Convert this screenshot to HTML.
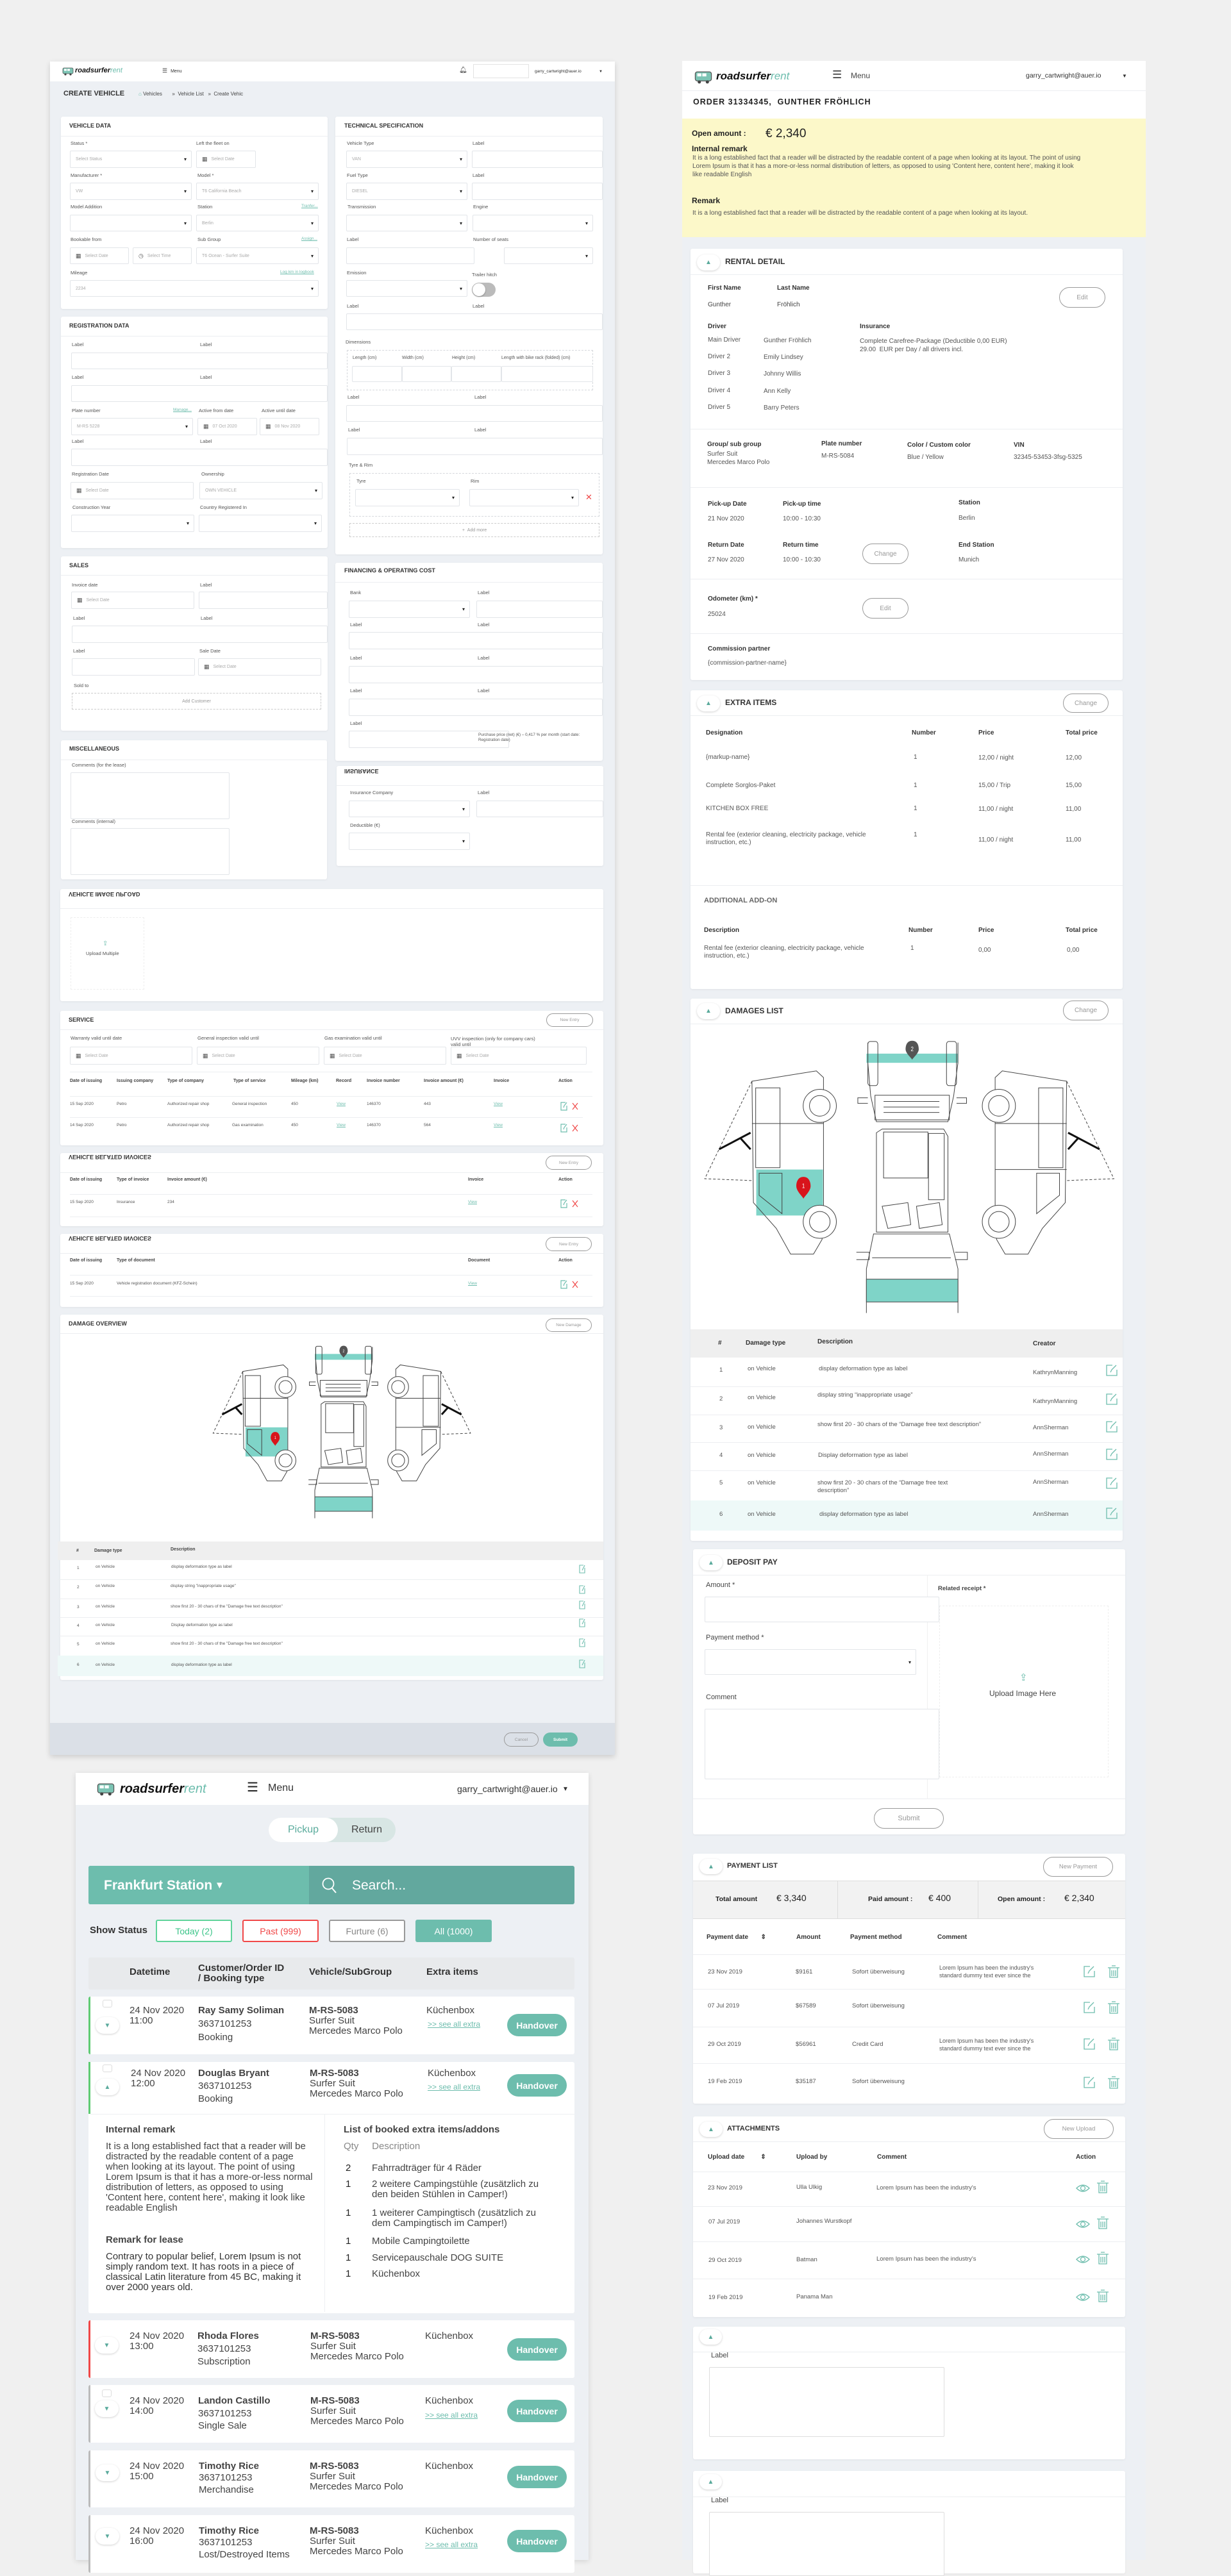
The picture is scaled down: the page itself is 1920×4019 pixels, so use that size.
<!DOCTYPE html>
<html><head><meta charset="utf-8">
<style>
*{margin:0;padding:0;box-sizing:border-box}
body{width:1920px;height:3994px;background:#f0f0f0;position:relative;overflow:hidden;font-family:"Liberation Sans",sans-serif;color:#333}
.a{position:absolute}
.t{position:absolute;white-space:nowrap;line-height:1}
.n{font-family:"Liberation Sans Narrow","Liberation Sans",sans-serif}
.L{font-size:7.5px;color:#555}
.i{position:absolute;background:#fff;border:1px solid #e2e5e9;border-radius:2px;font-size:7px;color:#aaa;padding-left:8px;display:flex;align-items:center;white-space:nowrap;overflow:hidden}
.s::after{content:"▾";position:absolute;right:7px;color:#222;font-size:8px}
.c{position:absolute;background:#fff;border-radius:3px;box-shadow:0 1px 3px rgba(0,0,0,.06)}
.h{position:absolute;height:1px;background:#eceef1}
.ct{position:absolute;font-size:9px;font-weight:bold;color:#333;white-space:nowrap;line-height:1}
.fl{transform:scaleY(-1)}
.lk{color:#6dbdad;text-decoration:underline}
.bo{position:absolute;border:1.5px solid #999;border-radius:20px;color:#999;display:flex;align-items:center;justify-content:center;background:#fff;white-space:nowrap}
.tg{position:absolute;width:36px;height:25px;border-radius:13px;background:#fff;box-shadow:0 1px 3px rgba(0,0,0,.18);color:#5aaa9c;font-size:10px;display:flex;align-items:center;justify-content:center}
.dash{position:absolute;border:1px dashed #d5d8dc}
.cal{color:#555;margin-right:6px;font-size:9px}
.x{color:#f04848}
.r{font-size:11px;color:#444}
.rb{font-size:11px;color:#333;font-weight:bold}
.B{font-size:15px;color:#444}
.hv{position:absolute;left:791px;width:93px;height:35px;border-radius:18px;background:#6dbdad;color:#fff;font-size:14px;font-weight:bold;display:flex;align-items:center;justify-content:center}
</style></head><body>

<!-- ============ LEFT BIG PANEL ============ -->
<div class="a" style="left:78px;top:96px;width:881px;height:2642px;background:#edf0f4;box-shadow:0 3px 8px rgba(0,0,0,.15)"></div>
<div class="a" style="left:78px;top:96px;width:881px;height:31px;background:#fff"></div>
<svg class="a" style="left:97px;top:104px" width="18" height="14" viewBox="0 0 18 14"><rect x="1" y="2" width="16" height="9" rx="2" fill="#7cc4b4" stroke="#555" stroke-width=".8"/><rect x="3" y="3.5" width="4" height="3" fill="#fff"/><rect x="8" y="3.5" width="4" height="3" fill="#fff"/><circle cx="5" cy="12" r="1.6" fill="#444"/><circle cx="13" cy="12" r="1.6" fill="#444"/></svg>
<div class="t" style="left:117px;top:105px;font-size:11px;font-weight:bold;font-style:italic;color:#111">roadsurfer<span style="color:#6dbdad;font-weight:normal">rent</span></div>
<div class="t" style="left:253px;top:106px;font-size:9px;color:#333">☰ &nbsp;<span style="font-size:7px">Menu</span></div>
<div class="t" style="left:716px;top:105px;font-size:10px">🔔︎</div>
<div class="a" style="left:738px;top:100px;width:87px;height:22px;border:1px solid #e3e3e3"></div>
<div class="t n" style="left:834px;top:109px;font-size:6.5px;color:#333">garry_cartwright@auer.io</div>
<div class="t" style="left:934px;top:109px;font-size:6px">▼</div>
<div class="t n" style="left:99px;top:141px;font-size:11px;font-weight:bold;color:#333">CREATE VEHICLE</div>
<div class="t n" style="left:216px;top:143px;font-size:8px;color:#444"><span style="color:#6dbdad">⌂</span> Vehicles &nbsp; &nbsp; &nbsp; » &nbsp;Vehicle List &nbsp; » &nbsp;Create Vehic</div>

<!-- Vehicle data -->
<div class="c n" style="left:95px;top:182px;width:416px;height:300px"></div>
<div class="ct n" style="left:108px;top:192px">VEHICLE DATA</div>
<div class="h" style="left:95px;top:212px;width:416px"></div>
<div class="t n L" style="left:110px;top:220px">Status *</div><div class="i s n" style="left:109px;top:235px;width:190px;height:27px">Select Status</div>
<div class="t n L" style="left:306px;top:220px">Left the fleet on</div><div class="i n" style="left:306px;top:235px;width:93px;height:27px"><span class="cal">▦</span>Select Date</div>
<div class="t n L" style="left:110px;top:270px">Manufacturer *</div><div class="i s n" style="left:109px;top:285px;width:190px;height:27px">VW</div>
<div class="t n L" style="left:308px;top:270px">Model *</div><div class="i s n" style="left:306px;top:285px;width:191px;height:27px">T6 California Beach</div>
<div class="t n L" style="left:110px;top:319px">Model Addition</div><div class="i s n" style="left:109px;top:335px;width:190px;height:26px"></div>
<div class="t n L" style="left:308px;top:319px">Station</div><div class="t n lk" style="left:470px;top:319px;font-size:6.5px">Tranfer...</div><div class="i s n" style="left:306px;top:335px;width:191px;height:26px">Berlin</div>
<div class="t n L" style="left:110px;top:370px">Bookable from</div><div class="i n" style="left:109px;top:386px;width:92px;height:26px"><span class="cal">▦</span>Select Date</div><div class="i n" style="left:207px;top:386px;width:92px;height:26px"><span class="cal">◷</span>Select Time</div>
<div class="t n L" style="left:308px;top:370px">Sub Group</div><div class="t n lk" style="left:470px;top:370px;font-size:6.5px">Assign...</div><div class="i s n" style="left:306px;top:386px;width:191px;height:26px">T6 Ocean - Surfer Suite</div>
<div class="t n L" style="left:110px;top:422px">Mileage</div><div class="t n lk" style="left:437px;top:422px;font-size:6.5px">Log km in logbook</div><div class="i s n" style="left:109px;top:437px;width:388px;height:26px">2234</div>

<!-- Technical spec -->
<div class="c n" style="left:523px;top:182px;width:417px;height:683px;overflow:hidden">
</div>
<div class="ct n" style="left:537px;top:192px">TECHNICAL SPECIFICATION</div>
<div class="h" style="left:523px;top:212px;width:417px"></div>
<div class="t n L" style="left:541px;top:220px">Vehicle Type</div><div class="i s n" style="left:540px;top:235px;width:189px;height:27px">VAN</div>
<div class="t n L" style="left:737px;top:220px">Label</div><div class="i n" style="left:736px;top:235px;width:204px;height:27px"></div>
<div class="t n L" style="left:541px;top:270px">Fuel Type</div><div class="i s n" style="left:540px;top:285px;width:189px;height:27px">DIESEL</div>
<div class="t n L" style="left:737px;top:270px">Label</div><div class="i n" style="left:736px;top:285px;width:204px;height:27px"></div>
<div class="t n L" style="left:542px;top:319px">Transmission</div><div class="i s n" style="left:540px;top:335px;width:189px;height:26px"></div>
<div class="t n L" style="left:738px;top:319px">Engine</div><div class="i s n" style="left:737px;top:335px;width:188px;height:26px"></div>
<div class="t n L" style="left:541px;top:370px">Label</div><div class="i n" style="left:540px;top:386px;width:200px;height:26px"></div>
<div class="t n L" style="left:738px;top:370px">Number of seats</div><div class="i s n" style="left:786px;top:386px;width:139px;height:26px"></div>
<div class="t n L" style="left:541px;top:422px">Emission</div><div class="i s n" style="left:540px;top:437px;width:189px;height:26px"></div>
<div class="t n L" style="left:736px;top:425px">Trailer hitch</div>
<div class="a" style="left:736px;top:441px;width:37px;height:22px;border-radius:11px;background:#bbb"></div><div class="a" style="left:737px;top:442px;width:20px;height:20px;border-radius:10px;background:#fff;box-shadow:0 1px 2px rgba(0,0,0,.3)"></div>
<div class="t n L" style="left:541px;top:474px">Label</div><div class="t n L" style="left:737px;top:474px">Label</div><div class="i n" style="left:540px;top:489px;width:400px;height:26px"></div>
<div class="t n L" style="left:539px;top:530px">Dimensions</div>
<div class="dash" style="left:541px;top:546px;width:384px;height:63px"></div>
<div class="t n L" style="left:550px;top:555px;font-size:7px">Length (cm)</div><div class="t n L" style="left:627px;top:555px;font-size:7px">Width (cm)</div><div class="t n L" style="left:705px;top:555px;font-size:7px">Height (cm)</div><div class="t n L" style="left:782px;top:555px;font-size:7px">Length with bike rack (folded) (cm)</div>
<div class="i" style="left:549px;top:571px;width:78px;height:25px"></div><div class="i" style="left:627px;top:571px;width:77px;height:25px"></div><div class="i" style="left:704px;top:571px;width:78px;height:25px"></div><div class="i" style="left:782px;top:571px;width:143px;height:25px"></div>
<div class="t n L" style="left:542px;top:616px">Label</div><div class="t n L" style="left:740px;top:616px">Label</div><div class="i" style="left:540px;top:632px;width:400px;height:26px"></div>
<div class="t n L" style="left:543px;top:667px">Label</div><div class="t n L" style="left:740px;top:667px">Label</div><div class="i" style="left:541px;top:683px;width:399px;height:27px"></div>
<div class="t n L" style="left:544px;top:722px">Tyre &amp; Rim</div>
<div class="dash" style="left:545px;top:738px;width:390px;height:68px"></div>
<div class="t n L" style="left:556px;top:747px">Tyre</div><div class="t n L" style="left:734px;top:747px">Rim</div>
<div class="i s" style="left:554px;top:763px;width:163px;height:27px"></div><div class="i s" style="left:732px;top:763px;width:171px;height:27px"></div>
<div class="t x" style="left:913px;top:769px;font-size:13px">✕</div>
<div class="dash n" style="left:545px;top:816px;width:390px;height:22px;display:flex;align-items:center;justify-content:center;font-size:7px;color:#999;border-color:#ccc">+ &nbsp;Add more</div>

<!-- Registration -->
<div class="c" style="left:95px;top:494px;width:416px;height:361px"></div>
<div class="ct n" style="left:108px;top:504px">REGISTRATION DATA</div>
<div class="h" style="left:95px;top:524px;width:416px"></div>
<div class="t n L" style="left:112px;top:534px">Label</div><div class="t n L" style="left:312px;top:534px">Label</div><div class="i" style="left:111px;top:550px;width:400px;height:26px"></div>
<div class="t n L" style="left:112px;top:585px">Label</div><div class="t n L" style="left:312px;top:585px">Label</div><div class="i" style="left:111px;top:601px;width:400px;height:26px"></div>
<div class="t n L" style="left:112px;top:637px">Plate number</div><div class="t n lk" style="left:270px;top:637px;font-size:6.5px">Manage...</div><div class="i s n" style="left:111px;top:652px;width:190px;height:27px">M-RS 5228</div>
<div class="t n L" style="left:310px;top:637px">Active from date</div><div class="i n" style="left:308px;top:652px;width:93px;height:27px"><span class="cal">▦</span>07 Oct 2020</div>
<div class="t n L" style="left:408px;top:637px">Active until date</div><div class="i n" style="left:405px;top:652px;width:93px;height:27px"><span class="cal">▦</span>08 Nov 2020</div>
<div class="t n L" style="left:112px;top:685px">Label</div><div class="t n L" style="left:312px;top:685px">Label</div><div class="i" style="left:111px;top:700px;width:400px;height:27px"></div>
<div class="t n L" style="left:112px;top:736px">Registration Date</div><div class="i n" style="left:110px;top:752px;width:192px;height:27px"><span class="cal">▦</span>Select Date</div>
<div class="t n L" style="left:314px;top:736px">Ownership</div><div class="i s n" style="left:311px;top:752px;width:192px;height:27px">OWN VEHICLE</div>
<div class="t n L" style="left:113px;top:788px">Construction Year</div><div class="i s" style="left:111px;top:803px;width:192px;height:27px"></div>
<div class="t n L" style="left:312px;top:788px">Country Registered In</div><div class="i s" style="left:310px;top:803px;width:192px;height:27px"></div>

<!-- Sales -->
<div class="c" style="left:95px;top:868px;width:416px;height:272px"></div>
<div class="ct n" style="left:108px;top:878px">SALES</div>
<div class="h" style="left:95px;top:897px;width:416px"></div>
<div class="t n L" style="left:112px;top:909px">Invoice date</div><div class="i n" style="left:111px;top:923px;width:192px;height:27px"><span class="cal">▦</span>Select Date</div>
<div class="t n L" style="left:312px;top:909px">Label</div><div class="i" style="left:310px;top:923px;width:201px;height:27px"></div>
<div class="t n L" style="left:114px;top:961px">Label</div><div class="t n L" style="left:313px;top:961px">Label</div><div class="i" style="left:112px;top:976px;width:399px;height:27px"></div>
<div class="t n L" style="left:114px;top:1012px">Label</div><div class="i" style="left:112px;top:1027px;width:192px;height:27px"></div>
<div class="t n L" style="left:311px;top:1012px">Sale Date</div><div class="i n" style="left:309px;top:1027px;width:192px;height:27px"><span class="cal">▦</span>Select Date</div>
<div class="t n L" style="left:115px;top:1066px">Sold to</div>
<div class="dash n" style="left:112px;top:1081px;width:389px;height:26px;display:flex;align-items:center;justify-content:center;font-size:7px;color:#999;border-color:#ccc">Add Customer</div>

<!-- Misc -->
<div class="c" style="left:95px;top:1155px;width:415px;height:217px"></div>
<div class="ct n" style="left:108px;top:1164px">MISCELLANEOUS</div>
<div class="h" style="left:95px;top:1185px;width:415px"></div>
<div class="t n L" style="left:112px;top:1190px">Comments (for the lease)</div><div class="i" style="left:110px;top:1205px;width:248px;height:73px"></div>
<div class="t n L" style="left:112px;top:1278px">Comments (internal)</div><div class="i" style="left:110px;top:1292px;width:248px;height:73px"></div>

<!-- Financing -->
<div class="c" style="left:523px;top:878px;width:417px;height:309px"></div>
<div class="ct n" style="left:537px;top:886px">FINANCING &amp; OPERATING COST</div>
<div class="h" style="left:523px;top:908px;width:417px"></div>
<div class="t n L" style="left:546px;top:921px">Bank</div><div class="t n L" style="left:745px;top:921px">Label</div>
<div class="i s" style="left:544px;top:937px;width:189px;height:27px"></div><div class="i" style="left:743px;top:937px;width:197px;height:27px"></div>
<div class="t n L" style="left:546px;top:971px">Label</div><div class="t n L" style="left:745px;top:971px">Label</div><div class="i" style="left:544px;top:986px;width:396px;height:27px"></div>
<div class="t n L" style="left:546px;top:1023px">Label</div><div class="t n L" style="left:745px;top:1023px">Label</div><div class="i" style="left:544px;top:1039px;width:396px;height:27px"></div>
<div class="t n L" style="left:546px;top:1074px">Label</div><div class="t n L" style="left:745px;top:1074px">Label</div><div class="i" style="left:544px;top:1090px;width:396px;height:27px"></div>
<div class="t n L" style="left:546px;top:1125px">Label</div><div class="i" style="left:544px;top:1140px;width:250px;height:27px"></div>
<div class="a n" style="left:746px;top:1143px;width:180px;font-size:6.3px;line-height:8px;color:#555">Purchase price (net) (€) – 0,417 % per month (start date: Registration date)</div>

<!-- Insurance -->
<div class="c" style="left:525px;top:1195px;width:416px;height:156px"></div>
<div class="ct n fl" style="left:537px;top:1198px">INSURANCE</div>
<div class="h" style="left:525px;top:1225px;width:416px"></div>
<div class="t n L" style="left:546px;top:1233px">Insurance Company</div><div class="i s" style="left:544px;top:1249px;width:189px;height:26px"></div>
<div class="t n L" style="left:745px;top:1233px">Label</div><div class="i" style="left:743px;top:1249px;width:198px;height:26px"></div>
<div class="t n L" style="left:546px;top:1284px">Deductible (€)</div><div class="i s" style="left:544px;top:1299px;width:189px;height:27px"></div>

<!-- Image upload -->
<div class="c" style="left:94px;top:1387px;width:847px;height:175px"></div>
<div class="ct n fl" style="left:107px;top:1390px">VEHICLE IMAGE UPLOAD</div>
<div class="h" style="left:94px;top:1417px;width:847px"></div>
<div class="dash" style="left:110px;top:1431px;width:115px;height:113px;border-color:#eee"></div>
<div class="t" style="left:160px;top:1468px;font-size:10px;color:#6dbdad">⇪</div>
<div class="t n" style="left:134px;top:1484px;font-size:7.5px;color:#555">Upload Multiple</div>

<!-- Service -->
<div class="c" style="left:94px;top:1577px;width:847px;height:210px"></div>
<div class="ct n" style="left:107px;top:1587px">SERVICE</div>
<div class="bo n" style="left:852px;top:1581px;width:73px;height:21px;font-size:6.5px">New Entry</div>
<div class="h" style="left:94px;top:1606px;width:847px"></div>
<div class="t n L" style="left:110px;top:1616px">Warranty valid until date</div><div class="t n L" style="left:308px;top:1616px">General inspection valid until</div><div class="t n L" style="left:506px;top:1616px">Gas examination valid until</div><div class="a n L" style="left:703px;top:1616px;line-height:9px">UVV inspection (only for company cars)<br>valid until</div>
<div class="i n" style="left:109px;top:1633px;width:191px;height:28px"><span class="cal">▦</span>Select Date</div>
<div class="i n" style="left:307px;top:1633px;width:191px;height:28px"><span class="cal">▦</span>Select Date</div>
<div class="i n" style="left:505px;top:1633px;width:191px;height:28px"><span class="cal">▦</span>Select Date</div>
<div class="i n" style="left:703px;top:1633px;width:212px;height:28px"><span class="cal">▦</span>Select Date</div>
<div class="h" style="left:109px;top:1672px;width:815px"></div>
<div class="n" style="font-size:7px;font-weight:bold;color:#444">
<div class="t" style="left:109px;top:1683px">Date of issuing</div><div class="t" style="left:182px;top:1683px">Issuing company</div><div class="t" style="left:261px;top:1683px">Type of company</div><div class="t" style="left:364px;top:1683px">Type of service</div><div class="t" style="left:454px;top:1683px">Mileage (km)</div><div class="t" style="left:524px;top:1683px">Record</div><div class="t" style="left:572px;top:1683px">Invoice number</div><div class="t" style="left:661px;top:1683px">Invoice amount (€)</div><div class="t" style="left:770px;top:1683px">Invoice</div><div class="t" style="left:871px;top:1683px">Action</div></div>
<div class="h" style="left:109px;top:1710px;width:815px"></div>
<div class="n" style="font-size:6.5px;color:#555">
<div class="t" style="left:109px;top:1720px">15 Sep 2020</div><div class="t" style="left:182px;top:1720px">Petro</div><div class="t" style="left:261px;top:1720px">Authorized repair shop</div><div class="t" style="left:362px;top:1720px">General inspection</div><div class="t" style="left:454px;top:1720px">450</div><div class="t lk" style="left:525px;top:1720px">View</div><div class="t" style="left:572px;top:1720px">146370</div><div class="t" style="left:661px;top:1720px">443</div><div class="t lk" style="left:770px;top:1720px">View</div>
<div class="t" style="left:109px;top:1753px">14 Sep 2020</div><div class="t" style="left:182px;top:1753px">Petro</div><div class="t" style="left:261px;top:1753px">Authorized repair shop</div><div class="t" style="left:362px;top:1753px">Gas examination</div><div class="t" style="left:454px;top:1753px">450</div><div class="t lk" style="left:525px;top:1753px">View</div><div class="t" style="left:572px;top:1753px">146370</div><div class="t" style="left:661px;top:1753px">564</div><div class="t lk" style="left:770px;top:1753px">View</div></div>
<div class="h" style="left:109px;top:1743px;width:800px"></div>

<!-- invoices 1 -->
<div class="c" style="left:94px;top:1799px;width:847px;height:114px"></div>
<div class="ct n fl" style="left:107px;top:1800px">VEHICLE RELATED INVOICES</div>
<div class="bo n" style="left:851px;top:1803px;width:72px;height:22px;font-size:6.5px">New Entry</div>
<div class="h" style="left:94px;top:1829px;width:847px"></div>
<div class="n" style="font-size:7px;font-weight:bold;color:#444"><div class="t" style="left:109px;top:1837px">Date of issuing</div><div class="t" style="left:182px;top:1837px">Type of invoice</div><div class="t" style="left:261px;top:1837px">Invoice amount (€)</div><div class="t" style="left:730px;top:1837px">Invoice</div><div class="t" style="left:871px;top:1837px">Action</div></div>
<div class="h" style="left:109px;top:1863px;width:815px"></div>
<div class="n" style="font-size:6.5px;color:#555"><div class="t" style="left:109px;top:1873px">15 Sep 2020</div><div class="t" style="left:182px;top:1873px">Insurance</div><div class="t" style="left:261px;top:1873px">234</div><div class="t lk" style="left:730px;top:1873px">View</div></div>
<div class="h" style="left:109px;top:1898px;width:815px"></div>

<!-- invoices 2 -->
<div class="c" style="left:94px;top:1925px;width:847px;height:114px"></div>
<div class="ct n fl" style="left:107px;top:1927px">VEHICLE RELATED INVOICES</div>
<div class="bo n" style="left:851px;top:1930px;width:72px;height:22px;font-size:6.5px">New Entry</div>
<div class="h" style="left:94px;top:1955px;width:847px"></div>
<div class="n" style="font-size:7px;font-weight:bold;color:#444"><div class="t" style="left:109px;top:1963px">Date of issuing</div><div class="t" style="left:182px;top:1963px">Type of document</div><div class="t" style="left:730px;top:1963px">Document</div><div class="t" style="left:871px;top:1963px">Action</div></div>
<div class="h" style="left:109px;top:1989px;width:815px"></div>
<div class="n" style="font-size:6.5px;color:#555"><div class="t" style="left:109px;top:2000px">15 Sep 2020</div><div class="t" style="left:182px;top:2000px">Vehicle registration document (KFZ-Schein)</div><div class="t lk" style="left:730px;top:2000px">View</div></div>
<div class="h" style="left:109px;top:2022px;width:815px"></div>

<!-- action icons (left panel) -->
<svg class="a" style="left:873px;top:1718px" width="40" height="56" viewBox="0 0 40 56"><g fill="none" stroke-width="1.2"><path d="M9 2H2v12h9V7" stroke="#6dbdad"/><path d="M6 10l1-3 4-5" stroke="#6dbdad"/><path d="M20 3l8 10M28 3l-8 10" stroke="#f04848"/><path d="M9 36H2v12h9V41" stroke="#6dbdad"/><path d="M6 44l1-3 4-5" stroke="#6dbdad"/><path d="M20 37l8 10M28 37l-8 10" stroke="#f04848"/></g></svg>
<svg class="a" style="left:873px;top:1870px" width="40" height="16" viewBox="0 0 40 16"><g fill="none" stroke-width="1.2"><path d="M9 2H2v12h9V7" stroke="#6dbdad"/><path d="M6 10l1-3 4-5" stroke="#6dbdad"/><path d="M20 3l8 10M28 3l-8 10" stroke="#f04848"/></g></svg>
<svg class="a" style="left:873px;top:1996px" width="40" height="16" viewBox="0 0 40 16"><g fill="none" stroke-width="1.2"><path d="M9 2H2v12h9V7" stroke="#6dbdad"/><path d="M6 10l1-3 4-5" stroke="#6dbdad"/><path d="M20 3l8 10M28 3l-8 10" stroke="#f04848"/></g></svg>

<!-- Damage overview -->
<div class="c" style="left:94px;top:2051px;width:847px;height:570px"></div>
<div class="ct n" style="left:107px;top:2061px">DAMAGE OVERVIEW</div>
<div class="bo n" style="left:851px;top:2057px;width:72px;height:21px;font-size:6.5px">New Damage</div>
<div class="h" style="left:94px;top:2080px;width:847px"></div>
<svg class="a" style="left:331px;top:2096px" width="407" height="280" viewBox="75 170 1450 770" preserveAspectRatio="none">
<g fill="none" stroke="#444" stroke-width="1" vector-effect="non-scaling-stroke">
<path d="M245 290L80 555L245 560" stroke-dasharray="4 3" vector-effect="non-scaling-stroke"/>
<path d="M130 475L240 430M205 445L240 475" stroke="#111" stroke-width="3" vector-effect="non-scaling-stroke"/>
<rect x="260" y="530" width="233" height="125" fill="#7fd4c8" stroke="none"/>
<path d="M245 290L470 262L495 280V650L490 720L460 760H380L330 690L250 620Z" vector-effect="non-scaling-stroke"/>
<rect x="258" y="308" width="85" height="217" vector-effect="non-scaling-stroke"/>
<path d="M245 405H495" vector-effect="non-scaling-stroke"/>
<path d="M270 540H350V650L270 600Z" vector-effect="non-scaling-stroke"/>
<ellipse cx="482" cy="357" rx="58" ry="45" fill="#fff" vector-effect="non-scaling-stroke"/><ellipse cx="482" cy="357" rx="36" ry="28" vector-effect="non-scaling-stroke"/>
<ellipse cx="482" cy="672" rx="58" ry="45" fill="#fff" vector-effect="non-scaling-stroke"/><ellipse cx="482" cy="672" rx="36" ry="28" vector-effect="non-scaling-stroke"/>
<path d="M1345 290L1510 555L1345 560" stroke-dasharray="4 3" vector-effect="non-scaling-stroke"/>
<path d="M1460 475L1350 430M1385 445L1350 475" stroke="#111" stroke-width="3" vector-effect="non-scaling-stroke"/>
<path d="M1345 290L1120 262L1095 280V650L1100 720L1130 760H1210L1260 690L1340 620Z" vector-effect="non-scaling-stroke"/>
<rect x="1247" y="308" width="85" height="217" vector-effect="non-scaling-stroke"/>
<path d="M1095 405H1345M1095 530H1345" vector-effect="non-scaling-stroke"/>
<path d="M1240 540H1320V600L1240 650Z" vector-effect="non-scaling-stroke"/>
<ellipse cx="1108" cy="357" rx="58" ry="45" fill="#fff" vector-effect="non-scaling-stroke"/><ellipse cx="1108" cy="357" rx="36" ry="28" vector-effect="non-scaling-stroke"/>
<ellipse cx="1108" cy="672" rx="58" ry="45" fill="#fff" vector-effect="non-scaling-stroke"/><ellipse cx="1108" cy="672" rx="36" ry="28" vector-effect="non-scaling-stroke"/>
<rect x="645" y="215" width="320" height="25" fill="#7fd4c8" stroke="none"/>
<path d="M650 185V240L660 330L680 400H930L950 330L965 240V185" vector-effect="non-scaling-stroke"/>
<rect x="650" y="182" width="35" height="120" rx="8" vector-effect="non-scaling-stroke"/><rect x="925" y="182" width="35" height="120" rx="8" vector-effect="non-scaling-stroke"/>
<path d="M675 328H935V395H675Z M705 345H900M705 360H900M705 375H900" vector-effect="non-scaling-stroke"/>
<path d="M650 335H615V350H650M960 335H995V350H960" vector-effect="non-scaling-stroke"/>
<path d="M680 430L700 420H915L930 440V700H680Z" vector-effect="non-scaling-stroke"/>
<rect x="705" y="428" width="155" height="125" vector-effect="non-scaling-stroke"/><rect x="862" y="432" width="55" height="180" vector-effect="non-scaling-stroke"/>
<path d="M700 630L790 620L800 680L720 690Z M820 630L900 620L910 680L830 690Z" vector-effect="non-scaling-stroke"/>
<path d="M645 920V800L670 705H935L965 800V920" vector-effect="non-scaling-stroke"/>
<path d="M665 770H940M610 755H655V775H610M955 755H998V775H955" vector-effect="non-scaling-stroke"/>
<rect x="645" y="828" width="320" height="62" fill="#7fd4c8" vector-effect="non-scaling-stroke"/>
</g>
<path d="M425 550C405 550 400 565 400 575C400 590 425 605 425 610C425 605 450 590 450 575C450 565 445 550 425 550Z" fill="#d8141c"/>
<text x="425" y="580" font-size="18" fill="#fff" text-anchor="middle" font-family="Liberation Sans">1</text>
<path d="M805 180C785 180 782 195 782 203C782 215 805 228 805 232C805 228 828 215 828 203C828 195 825 180 805 180Z" fill="#555"/>
<text x="805" y="208" font-size="18" fill="#fff" text-anchor="middle" font-family="Liberation Sans">2</text>
</svg>
<div class="a" style="left:90px;top:2405px;width:851px;height:29px;background:#efefef"></div>
<div class="n" style="font-size:7px;font-weight:bold;color:#444"><div class="t" style="left:119px;top:2416px">#</div><div class="t" style="left:147px;top:2416px">Damage type</div><div class="t" style="left:266px;top:2414px">Description</div></div>
<div class="a" style="left:90px;top:2583px;width:851px;height:32px;background:#eef9f8"></div>
<div class="h" style="left:90px;top:2464px;width:851px"></div><div class="h" style="left:90px;top:2494px;width:851px"></div><div class="h" style="left:90px;top:2523px;width:851px"></div><div class="h" style="left:90px;top:2552px;width:851px"></div>
<div class="n" style="font-size:6.5px;color:#555">
<div class="t" style="left:120px;top:2444px">1</div><div class="t" style="left:149px;top:2442px">on Vehicle</div><div class="t" style="left:267px;top:2442px">display deformation type as label</div>
<div class="t" style="left:120px;top:2474px">2</div><div class="t" style="left:149px;top:2472px">on Vehicle</div><div class="t" style="left:266px;top:2472px">display string "inappropriate usage"</div>
<div class="t" style="left:120px;top:2505px">3</div><div class="t" style="left:149px;top:2504px">on Vehicle</div><div class="t" style="left:266px;top:2504px">show first 20 - 30 chars of the "Damage free text description"</div>
<div class="t" style="left:120px;top:2534px">4</div><div class="t" style="left:149px;top:2533px">on Vehicle</div><div class="t" style="left:267px;top:2533px">Display deformation type as label</div>
<div class="t" style="left:120px;top:2563px">5</div><div class="t" style="left:149px;top:2562px">on Vehicle</div><div class="t" style="left:266px;top:2562px">show first 20 - 30 chars of the "Damage free text description"</div>
<div class="t" style="left:120px;top:2595px">6</div><div class="t" style="left:149px;top:2595px">on Vehicle</div><div class="t" style="left:267px;top:2595px">display deformation type as label</div></div>
<svg class="a" style="left:902px;top:2440px" width="12" height="170" viewBox="0 0 12 170"><g fill="none" stroke="#6dbdad" stroke-width="1.1"><path d="M8 2H2v12h8V6M6 10l4-8"/><path d="M8 34H2v12h8V38M6 42l4-8"/><path d="M8 58H2v12h8V62M6 66l4-8"/><path d="M8 86H2v12h8V90M6 94l4-8"/><path d="M8 117H2v12h8V121M6 125l4-8"/><path d="M8 150H2v12h8V154M6 158l4-8"/></g></svg>
<div class="a" style="left:78px;top:2688px;width:881px;height:50px;background:#dbe0e7"></div>
<div class="bo n" style="left:786px;top:2703px;width:54px;height:22px;font-size:6.5px;background:transparent">Cancel</div>
<div class="a n" style="left:847px;top:2703px;width:54px;height:22px;border-radius:11px;background:#6dbdad;color:#fff;font-size:6.5px;font-weight:bold;display:flex;align-items:center;justify-content:center">Submit</div>

<!-- ============ RIGHT PANEL ============ -->
<div class="a" style="left:1064px;top:95px;width:723px;height:3899px;background:#edf0f4"></div>
<div class="a" style="left:1064px;top:95px;width:723px;height:90px;background:#fff"></div>
<div class="h" style="left:1064px;top:141px;width:723px"></div>
<svg class="a" style="left:1082px;top:109px" width="30" height="22" viewBox="0 0 18 14"><rect x="1" y="2" width="16" height="9" rx="2" fill="#7cc4b4" stroke="#555" stroke-width=".8"/><rect x="3" y="3.5" width="4" height="3" fill="#fff"/><rect x="8" y="3.5" width="4" height="3" fill="#fff"/><circle cx="5" cy="12" r="1.6" fill="#444"/><circle cx="13" cy="12" r="1.6" fill="#444"/></svg>
<div class="t" style="left:1117px;top:110px;font-size:17px;font-weight:bold;font-style:italic;color:#111">roadsurfer<span style="color:#6dbdad;font-weight:normal">rent</span></div>
<div class="t" style="left:1298px;top:108px;font-size:17px;color:#333">☰</div><div class="t" style="left:1327px;top:112px;font-size:12px;color:#444">Menu</div>
<div class="t" style="left:1600px;top:113px;font-size:10.5px;color:#333">garry_cartwright@auer.io</div>
<div class="t" style="left:1750px;top:115px;font-size:8px">▼</div>
<div class="t" style="left:1081px;top:153px;font-size:12.5px;font-weight:bold;letter-spacing:1px;color:#222">ORDER 31334345, &nbsp;GUNTHER FRÖHLICH</div>
<div class="a" style="left:1064px;top:185px;width:723px;height:185px;background:#fcf8c9"></div>
<div class="t" style="left:1079px;top:202px;font-size:12px;font-weight:bold;color:#222">Open amount :</div>
<div class="t" style="left:1194px;top:199px;font-size:19px;color:#222">€ 2,340</div>
<div class="t" style="left:1079px;top:226px;font-size:12px;font-weight:bold;color:#222">Internal remark</div>
<div class="a" style="left:1080px;top:240px;width:610px;font-size:10px;line-height:13px;color:#555">It is a long established fact that a reader will be distracted by the readable content of a page when looking at its layout. The point of using Lorem Ipsum is that it has a more-or-less normal distribution of letters, as opposed to using 'Content here, content here', making it look like readable English</div>
<div class="t" style="left:1079px;top:307px;font-size:12px;font-weight:bold;color:#222">Remark</div>
<div class="t" style="left:1080px;top:328px;font-size:10px;color:#555">It is a long established fact that a reader will be distracted by the readable content of a page when looking at its layout.</div>

<!-- rental detail -->
<div class="c" style="left:1077px;top:388px;width:674px;height:673px"></div>
<div class="tg" style="left:1087px;top:397px">▲</div>
<div class="t" style="left:1131px;top:402px;font-size:12px;font-weight:bold;color:#333">RENTAL DETAIL</div>
<div class="h" style="left:1077px;top:428px;width:674px"></div>
<div class="t rb" style="left:1104px;top:445px;font-size:10px">First Name</div><div class="t rb" style="left:1212px;top:445px;font-size:10px">Last Name</div>
<div class="t r" style="left:1104px;top:471px;font-size:10px">Gunther</div><div class="t r" style="left:1212px;top:471px;font-size:10px">Fröhlich</div>
<div class="bo" style="left:1652px;top:448px;width:72px;height:32px;font-size:10px">Edit</div>
<div class="t rb" style="left:1104px;top:505px;font-size:10px">Driver</div><div class="t rb" style="left:1341px;top:505px;font-size:10px">Insurance</div>
<div style="font-size:10px;color:#555">
<div class="t" style="left:1104px;top:526px">Main Driver</div><div class="t" style="left:1191px;top:527px">Gunther Fröhlich</div>
<div class="t" style="left:1104px;top:552px">Driver 2</div><div class="t" style="left:1191px;top:553px">Emily Lindsey</div>
<div class="t" style="left:1104px;top:578px">Driver 3</div><div class="t" style="left:1191px;top:579px">Johnny Willis</div>
<div class="t" style="left:1104px;top:605px">Driver 4</div><div class="t" style="left:1191px;top:606px">Ann Kelly</div>
<div class="t" style="left:1104px;top:631px">Driver 5</div><div class="t" style="left:1191px;top:632px">Barry Peters</div>
<div class="a" style="left:1341px;top:526px;line-height:13px;white-space:nowrap">Complete Carefree-Package (Deductible 0,00 EUR)<br>29.00 &nbsp;EUR per Day / all drivers incl.</div>
</div>
<div class="h" style="left:1077px;top:669px;width:674px"></div>
<div class="t rb" style="left:1103px;top:689px;font-size:10px">Group/ sub group</div><div class="t rb" style="left:1281px;top:688px;font-size:10px">Plate number</div><div class="t rb" style="left:1415px;top:690px;font-size:10px">Color / Custom color</div><div class="t rb" style="left:1581px;top:690px;font-size:10px">VIN</div>
<div class="a" style="left:1103px;top:702px;font-size:10px;line-height:13px;color:#555">Surfer Suit<br>Mercedes Marco Polo</div>
<div class="t" style="left:1281px;top:707px;font-size:10px;color:#555">M-RS-5084</div><div class="t" style="left:1415px;top:709px;font-size:10px;color:#555">Blue / Yellow</div><div class="t" style="left:1581px;top:709px;font-size:10px;color:#555">32345-53453-3fsg-5325</div>
<div class="h" style="left:1077px;top:760px;width:674px"></div>
<div class="t rb" style="left:1104px;top:782px;font-size:10px">Pick-up Date</div><div class="t rb" style="left:1221px;top:782px;font-size:10px">Pick-up time</div><div class="t rb" style="left:1495px;top:780px;font-size:10px">Station</div>
<div class="t" style="left:1104px;top:805px;font-size:10px;color:#555">21 Nov 2020</div><div class="t" style="left:1221px;top:805px;font-size:10px;color:#555">10:00 - 10:30</div><div class="t" style="left:1495px;top:804px;font-size:10px;color:#555">Berlin</div>
<div class="t rb" style="left:1104px;top:846px;font-size:10px">Return Date</div><div class="t rb" style="left:1221px;top:846px;font-size:10px">Return time</div><div class="t rb" style="left:1495px;top:846px;font-size:10px">End Station</div>
<div class="t" style="left:1104px;top:869px;font-size:10px;color:#555">27 Nov 2020</div><div class="t" style="left:1221px;top:869px;font-size:10px;color:#555">10:00 - 10:30</div><div class="t" style="left:1495px;top:869px;font-size:10px;color:#555">Munich</div>
<div class="bo" style="left:1345px;top:848px;width:72px;height:32px;font-size:10px">Change</div>
<div class="h" style="left:1077px;top:903px;width:674px"></div>
<div class="t rb" style="left:1104px;top:930px;font-size:10px">Odometer (km) *</div><div class="t" style="left:1104px;top:954px;font-size:10px;color:#555">25024</div>
<div class="bo" style="left:1345px;top:933px;width:72px;height:32px;font-size:10px">Edit</div>
<div class="h" style="left:1077px;top:988px;width:674px"></div>
<div class="t rb" style="left:1104px;top:1008px;font-size:10px">Commission partner</div><div class="t" style="left:1104px;top:1030px;font-size:10px;color:#555">{commission-partner-name}</div>

<!-- extra items -->
<div class="c" style="left:1077px;top:1077px;width:674px;height:466px"></div>
<div class="tg" style="left:1087px;top:1085px">▲</div>
<div class="t" style="left:1131px;top:1090px;font-size:12px;font-weight:bold;color:#333">EXTRA ITEMS</div>
<div class="bo" style="left:1658px;top:1082px;width:71px;height:30px;font-size:10px">Change</div>
<div class="h" style="left:1077px;top:1116px;width:674px"></div>
<div class="t rb" style="left:1101px;top:1139px;font-size:10px">Designation</div><div class="t rb" style="left:1422px;top:1139px;font-size:10px">Number</div><div class="t rb" style="left:1526px;top:1139px;font-size:10px">Price</div><div class="t rb" style="left:1662px;top:1139px;font-size:10px">Total price</div>
<div style="font-size:10px;color:#555">
<div class="t" style="left:1101px;top:1177px">{markup-name}</div><div class="t" style="left:1425px;top:1177px">1</div><div class="t" style="left:1526px;top:1178px">12,00 / night</div><div class="t" style="left:1662px;top:1178px">12,00</div>
<div class="t" style="left:1101px;top:1221px">Complete Sorglos-Paket</div><div class="t" style="left:1425px;top:1221px">1</div><div class="t" style="left:1526px;top:1221px">15,00 / Trip</div><div class="t" style="left:1662px;top:1221px">15,00</div>
<div class="t" style="left:1101px;top:1257px">KITCHEN BOX FREE</div><div class="t" style="left:1425px;top:1257px">1</div><div class="t" style="left:1526px;top:1258px">11,00 / night</div><div class="t" style="left:1662px;top:1258px">11,00</div>
<div class="a" style="left:1101px;top:1297px;line-height:12px;white-space:nowrap">Rental fee (exterior cleaning, electricity package, vehicle<br>instruction, etc.)</div><div class="t" style="left:1425px;top:1298px">1</div><div class="t" style="left:1526px;top:1306px">11,00 / night</div><div class="t" style="left:1662px;top:1306px">11,00</div>
</div>
<div class="h" style="left:1077px;top:1381px;width:674px"></div>
<div class="t" style="left:1098px;top:1400px;font-size:11px;font-weight:bold;color:#666">ADDITIONAL ADD-ON</div>
<div class="t rb" style="left:1098px;top:1447px;font-size:10px">Description</div><div class="t rb" style="left:1417px;top:1447px;font-size:10px">Number</div><div class="t rb" style="left:1526px;top:1447px;font-size:10px">Price</div><div class="t rb" style="left:1662px;top:1447px;font-size:10px">Total price</div>
<div class="a" style="left:1098px;top:1474px;font-size:10px;line-height:12px;color:#555;white-space:nowrap">Rental fee (exterior cleaning, electricity package, vehicle<br>instruction, etc.)</div>
<div class="t" style="left:1420px;top:1475px;font-size:10px;color:#555">1</div><div class="t" style="left:1526px;top:1478px;font-size:10px;color:#555">0,00</div><div class="t" style="left:1664px;top:1478px;font-size:10px;color:#555">0,00</div>

<!-- damages list -->
<div class="c" style="left:1077px;top:1558px;width:674px;height:846px"></div>
<div class="tg" style="left:1087px;top:1565px">▲</div>
<div class="t" style="left:1131px;top:1571px;font-size:12px;font-weight:bold;color:#333">DAMAGES LIST</div>
<div class="bo" style="left:1658px;top:1561px;width:71px;height:31px;font-size:10px">Change</div>
<div class="h" style="left:1077px;top:1597px;width:674px"></div>
<svg class="a" style="left:1097px;top:1618px" width="647" height="442" viewBox="75 170 1450 770" preserveAspectRatio="none">
<g fill="none" stroke="#444" stroke-width="1">
<path d="M245 290L80 555L245 560" stroke-dasharray="4 3" vector-effect="non-scaling-stroke"/>
<path d="M130 475L240 430M205 445L240 475" stroke="#111" stroke-width="3" vector-effect="non-scaling-stroke"/>
<rect x="260" y="530" width="233" height="125" fill="#7fd4c8" stroke="none"/>
<path d="M245 290L470 262L495 280V650L490 720L460 760H380L330 690L250 620Z" vector-effect="non-scaling-stroke"/>
<rect x="258" y="308" width="85" height="217" vector-effect="non-scaling-stroke"/>
<path d="M245 405H495" vector-effect="non-scaling-stroke"/>
<path d="M270 540H350V650L270 600Z" vector-effect="non-scaling-stroke"/>
<ellipse cx="482" cy="357" rx="58" ry="45" fill="#fff" vector-effect="non-scaling-stroke"/><ellipse cx="482" cy="357" rx="36" ry="28" vector-effect="non-scaling-stroke"/>
<ellipse cx="482" cy="672" rx="58" ry="45" fill="#fff" vector-effect="non-scaling-stroke"/><ellipse cx="482" cy="672" rx="36" ry="28" vector-effect="non-scaling-stroke"/>
<path d="M1345 290L1510 555L1345 560" stroke-dasharray="4 3" vector-effect="non-scaling-stroke"/>
<path d="M1460 475L1350 430M1385 445L1350 475" stroke="#111" stroke-width="3" vector-effect="non-scaling-stroke"/>
<path d="M1345 290L1120 262L1095 280V650L1100 720L1130 760H1210L1260 690L1340 620Z" vector-effect="non-scaling-stroke"/>
<rect x="1247" y="308" width="85" height="217" vector-effect="non-scaling-stroke"/>
<path d="M1095 405H1345M1095 530H1345" vector-effect="non-scaling-stroke"/>
<path d="M1240 540H1320V600L1240 650Z" vector-effect="non-scaling-stroke"/>
<ellipse cx="1108" cy="357" rx="58" ry="45" fill="#fff" vector-effect="non-scaling-stroke"/><ellipse cx="1108" cy="357" rx="36" ry="28" vector-effect="non-scaling-stroke"/>
<ellipse cx="1108" cy="672" rx="58" ry="45" fill="#fff" vector-effect="non-scaling-stroke"/><ellipse cx="1108" cy="672" rx="36" ry="28" vector-effect="non-scaling-stroke"/>
<rect x="645" y="215" width="320" height="25" fill="#7fd4c8" stroke="none"/>
<path d="M650 185V240L660 330L680 400H930L950 330L965 240V185" vector-effect="non-scaling-stroke"/>
<rect x="650" y="182" width="35" height="120" rx="8" vector-effect="non-scaling-stroke"/><rect x="925" y="182" width="35" height="120" rx="8" vector-effect="non-scaling-stroke"/>
<path d="M675 328H935V395H675Z M705 345H900M705 360H900M705 375H900" vector-effect="non-scaling-stroke"/>
<path d="M650 335H615V350H650M960 335H995V350H960" vector-effect="non-scaling-stroke"/>
<path d="M680 430L700 420H915L930 440V700H680Z" vector-effect="non-scaling-stroke"/>
<rect x="705" y="428" width="155" height="125" vector-effect="non-scaling-stroke"/><rect x="862" y="432" width="55" height="180" vector-effect="non-scaling-stroke"/>
<path d="M700 630L790 620L800 680L720 690Z M820 630L900 620L910 680L830 690Z" vector-effect="non-scaling-stroke"/>
<path d="M645 920V800L670 705H935L965 800V920" vector-effect="non-scaling-stroke"/>
<path d="M665 770H940M610 755H655V775H610M955 755H998V775H955" vector-effect="non-scaling-stroke"/>
<rect x="645" y="828" width="320" height="62" fill="#7fd4c8" vector-effect="non-scaling-stroke"/>
</g>
<path d="M425 550C405 550 400 565 400 575C400 590 425 605 425 610C425 605 450 590 450 575C450 565 445 550 425 550Z" fill="#d8141c"/>
<text x="425" y="580" font-size="18" fill="#fff" text-anchor="middle" font-family="Liberation Sans">1</text>
<path d="M805 180C785 180 782 195 782 203C782 215 805 228 805 232C805 228 828 215 828 203C828 195 825 180 805 180Z" fill="#555"/>
<text x="805" y="208" font-size="18" fill="#fff" text-anchor="middle" font-family="Liberation Sans">2</text>
</svg>
<div class="a" style="left:1077px;top:2074px;width:674px;height:44px;background:#efefef"></div>
<div class="t rb" style="left:1120px;top:2091px;font-size:10px">#</div><div class="t rb" style="left:1163px;top:2091px;font-size:10px">Damage type</div><div class="t rb" style="left:1275px;top:2089px;font-size:10px">Description</div><div class="t rb" style="left:1611px;top:2092px;font-size:10px">Creator</div>
<div class="a" style="left:1077px;top:2341px;width:674px;height:47px;background:#eef9f8"></div>
<div class="h" style="left:1077px;top:2163px;width:674px"></div><div class="h" style="left:1077px;top:2207px;width:674px"></div><div class="h" style="left:1077px;top:2250px;width:674px"></div><div class="h" style="left:1077px;top:2294px;width:674px"></div>
<div style="font-size:9.5px;color:#555">
<div class="t" style="left:1122px;top:2133px">1</div><div class="t" style="left:1166px;top:2131px">on Vehicle</div><div class="t" style="left:1277px;top:2131px">display deformation type as label</div><div class="t" style="left:1611px;top:2137px">KathrynManning</div>
<div class="t" style="left:1122px;top:2178px">2</div><div class="t" style="left:1166px;top:2176px">on Vehicle</div><div class="t" style="left:1275px;top:2172px">display string “inappropriate usage”</div><div class="t" style="left:1611px;top:2182px">KathrynManning</div>
<div class="t" style="left:1122px;top:2223px">3</div><div class="t" style="left:1166px;top:2222px">on Vehicle</div><div class="t" style="left:1275px;top:2218px">show first 20 - 30 chars of the “Damage free text description”</div><div class="t" style="left:1611px;top:2223px">AnnSherman</div>
<div class="t" style="left:1122px;top:2266px">4</div><div class="t" style="left:1166px;top:2266px">on Vehicle</div><div class="t" style="left:1276px;top:2266px">Display deformation type as label</div><div class="t" style="left:1611px;top:2264px">AnnSherman</div>
<div class="t" style="left:1122px;top:2309px">5</div><div class="t" style="left:1166px;top:2309px">on Vehicle</div><div class="a" style="left:1275px;top:2308px;line-height:12px;white-space:nowrap">show first 20 - 30 chars of the “Damage free text<br>description”</div><div class="t" style="left:1611px;top:2308px">AnnSherman</div>
<div class="t" style="left:1122px;top:2358px">6</div><div class="t" style="left:1166px;top:2358px">on Vehicle</div><div class="t" style="left:1278px;top:2358px">display deformation type as label</div><div class="t" style="left:1611px;top:2358px">AnnSherman</div>
</div>
<svg class="a" style="left:1724px;top:2128px" width="20" height="250" viewBox="0 0 20 250"><g fill="none" stroke="#6dbdad" stroke-width="1.3"><path d="M11 2H2v16h16V9M8 13l2-4 7-7"/><path d="M11 47H2v16h16V54M8 58l2-4 7-7"/><path d="M11 90H2v16h16V97M8 101l2-4 7-7"/><path d="M11 133H2v16h16V140M8 144l2-4 7-7"/><path d="M11 178H2v16h16V185M8 189l2-4 7-7"/><path d="M11 225H2v16h16V232M8 236l2-4 7-7"/></g></svg>

<!-- deposit pay -->
<div class="c" style="left:1081px;top:2417px;width:674px;height:445px"></div>
<div class="tg" style="left:1091px;top:2426px;height:24px">▲</div>
<div class="t n" style="left:1134px;top:2431px;font-size:12px;font-weight:bold;color:#333">DEPOSIT PAY</div>
<div class="h" style="left:1081px;top:2457px;width:674px"></div>
<div class="a" style="left:1446px;top:2457px;width:1px;height:350px;background:#f0f0f0"></div>
<div class="t n" style="left:1101px;top:2468px;font-size:11px;color:#444">Amount *</div>
<div class="i" style="left:1099px;top:2491px;width:366px;height:40px"></div>
<div class="t n" style="left:1101px;top:2550px;font-size:11px;color:#444">Payment method *</div>
<div class="i s" style="left:1099px;top:2573px;width:330px;height:40px"></div>
<div class="t n" style="left:1101px;top:2643px;font-size:11px;color:#444">Comment</div>
<div class="i" style="left:1099px;top:2666px;width:366px;height:110px"></div>
<div class="t n" style="left:1463px;top:2474px;font-size:9.5px;font-weight:bold;color:#444">Related receipt *</div>
<div class="dash" style="left:1465px;top:2505px;width:264px;height:268px;border-color:#eee"></div>
<div class="t" style="left:1590px;top:2610px;font-size:15px;color:#6dbdad">⇪</div>
<div class="t n" style="left:1543px;top:2636px;font-size:12px;color:#444">Upload Image Here</div>
<div class="h" style="left:1081px;top:2806px;width:674px"></div>
<div class="bo n" style="left:1363px;top:2821px;width:109px;height:32px;font-size:11px">Submit</div>

<!-- payment list -->
<div class="c" style="left:1081px;top:2892px;width:674px;height:390px"></div>
<div class="tg" style="left:1091px;top:2900px;height:24px">▲</div>
<div class="t" style="left:1134px;top:2906px;font-size:11px;font-weight:bold;color:#333">PAYMENT LIST</div>
<div class="bo" style="left:1627px;top:2897px;width:109px;height:31px;font-size:9.5px">New Payment</div>
<div class="a" style="left:1081px;top:2934px;width:674px;height:60px;background:#f2f2f2;border-top:1px solid #ddd;border-bottom:1px solid #ddd"></div>
<div class="a" style="left:1306px;top:2934px;width:1px;height:60px;background:#ddd"></div><div class="a" style="left:1525px;top:2934px;width:1px;height:60px;background:#ddd"></div>
<div class="t" style="left:1116px;top:2958px;font-size:10.5px;font-weight:bold;color:#222">Total amount</div><div class="t" style="left:1211px;top:2954px;font-size:14px;color:#222">€ 3,340</div>
<div class="t" style="left:1354px;top:2958px;font-size:10.5px;font-weight:bold;color:#222">Paid amount :</div><div class="t" style="left:1448px;top:2954px;font-size:14px;color:#222">€ 400</div>
<div class="t" style="left:1556px;top:2958px;font-size:10.5px;font-weight:bold;color:#222">Open amount :</div><div class="t" style="left:1660px;top:2954px;font-size:14px;color:#222">€ 2,340</div>
<div class="t rb" style="left:1102px;top:3018px;font-size:10px">Payment date &nbsp; &nbsp; &nbsp; ⇕</div><div class="t rb" style="left:1242px;top:3018px;font-size:10px">Amount</div><div class="t rb" style="left:1326px;top:3018px;font-size:10px">Payment method</div><div class="t rb" style="left:1462px;top:3018px;font-size:10px">Comment</div>
<div class="h" style="left:1081px;top:3049px;width:674px"></div><div class="h" style="left:1081px;top:3103px;width:674px"></div><div class="h" style="left:1081px;top:3162px;width:674px"></div><div class="h" style="left:1081px;top:3219px;width:674px"></div>
<div style="font-size:9.5px;color:#555">
<div class="t" style="left:1104px;top:3072px">23 Nov 2019</div><div class="t" style="left:1241px;top:3072px">$9161</div><div class="t" style="left:1329px;top:3072px">Sofort überweisung</div><div class="a" style="left:1465px;top:3064px;line-height:12px;font-size:9px;white-space:nowrap">Lorem Ipsum has been the industry's<br>standard dummy text ever since the</div>
<div class="t" style="left:1104px;top:3125px">07 Jul 2019</div><div class="t" style="left:1241px;top:3125px">$67589</div><div class="t" style="left:1329px;top:3125px">Sofort überweisung</div>
<div class="t" style="left:1104px;top:3185px">29 Oct 2019</div><div class="t" style="left:1241px;top:3185px">$56961</div><div class="t" style="left:1329px;top:3185px">Credit Card</div><div class="a" style="left:1465px;top:3178px;line-height:12px;font-size:9px;white-space:nowrap">Lorem Ipsum has been the industry's<br>standard dummy text ever since the</div>
<div class="t" style="left:1104px;top:3243px">19 Feb 2019</div><div class="t" style="left:1241px;top:3243px">$35187</div><div class="t" style="left:1329px;top:3243px">Sofort überweisung</div>
</div>
<svg class="a" style="left:1689px;top:3066px" width="60" height="196" viewBox="0 0 60 196"><g fill="none" stroke="#6dbdad" stroke-width="1.3"><g id="ed"><path d="M11 2H2v16h16V9M8 13l2-4 7-7"/><path d="M39 4h18M42 4V19h12V4M45 8v9M48 8v9M51 8v9M45 1h6"/></g><g transform="translate(0,56)"><path d="M11 2H2v16h16V9M8 13l2-4 7-7"/><path d="M39 4h18M42 4V19h12V4M45 8v9M48 8v9M51 8v9M45 1h6"/></g><g transform="translate(0,113)"><path d="M11 2H2v16h16V9M8 13l2-4 7-7"/><path d="M39 4h18M42 4V19h12V4M45 8v9M48 8v9M51 8v9M45 1h6"/></g><g transform="translate(0,173)"><path d="M11 2H2v16h16V9M8 13l2-4 7-7"/><path d="M39 4h18M42 4V19h12V4M45 8v9M48 8v9M51 8v9M45 1h6"/></g></g></svg>

<!-- attachments -->
<div class="c" style="left:1081px;top:3302px;width:674px;height:313px"></div>
<div class="tg" style="left:1091px;top:3310px;height:24px">▲</div>
<div class="t" style="left:1134px;top:3316px;font-size:11px;font-weight:bold;color:#333">ATTACHMENTS</div>
<div class="bo" style="left:1628px;top:3306px;width:109px;height:31px;font-size:9.5px">New Upload</div>
<div class="h" style="left:1081px;top:3341px;width:674px"></div>
<div class="t rb" style="left:1104px;top:3361px;font-size:10px">Upload date &nbsp; &nbsp; &nbsp; &nbsp; ⇕</div><div class="t rb" style="left:1242px;top:3361px;font-size:10px">Upload by</div><div class="t rb" style="left:1368px;top:3361px;font-size:10px">Comment</div><div class="t rb" style="left:1678px;top:3361px;font-size:10px">Action</div>
<div class="h" style="left:1081px;top:3388px;width:674px"></div><div class="h" style="left:1081px;top:3442px;width:674px"></div><div class="h" style="left:1081px;top:3497px;width:674px"></div><div class="h" style="left:1081px;top:3555px;width:674px"></div>
<div style="font-size:9.5px;color:#555">
<div class="t" style="left:1104px;top:3409px">23 Nov 2019</div><div class="t" style="left:1242px;top:3408px">Ulla Ulkig</div><div class="t" style="left:1367px;top:3409px">Lorem Ipsum has been the industry's</div>
<div class="t" style="left:1105px;top:3462px">07 Jul 2019</div><div class="t" style="left:1242px;top:3461px">Johannes Wurstkopf</div>
<div class="t" style="left:1105px;top:3522px">29 Oct 2019</div><div class="t" style="left:1242px;top:3521px">Batman</div><div class="t" style="left:1367px;top:3520px">Lorem Ipsum has been the industry's</div>
<div class="t" style="left:1105px;top:3580px">19 Feb 2019</div><div class="t" style="left:1242px;top:3579px">Panama Man</div>
</div>
<svg class="a" style="left:1677px;top:3402px" width="60" height="200" viewBox="0 0 60 200"><g fill="none" stroke="#6dbdad" stroke-width="1.3"><g><path d="M2 12Q12 2 22 12Q12 22 2 12Z"/><circle cx="12" cy="12" r="3.5"/><path d="M34 4h18M37 4V19h12V4M40 8v9M43 8v9M46 8v9M40 1h6"/></g><g transform="translate(0,56)"><path d="M2 12Q12 2 22 12Q12 22 2 12Z"/><circle cx="12" cy="12" r="3.5"/><path d="M34 4h18M37 4V19h12V4M40 8v9M43 8v9M46 8v9M40 1h6"/></g><g transform="translate(0,111)"><path d="M2 12Q12 2 22 12Q12 22 2 12Z"/><circle cx="12" cy="12" r="3.5"/><path d="M34 4h18M37 4V19h12V4M40 8v9M43 8v9M46 8v9M40 1h6"/></g><g transform="translate(0,170)"><path d="M2 12Q12 2 22 12Q12 22 2 12Z"/><circle cx="12" cy="12" r="3.5"/><path d="M34 4h18M37 4V19h12V4M40 8v9M43 8v9M46 8v9M40 1h6"/></g></g></svg>

<!-- label cards -->
<div class="c" style="left:1081px;top:3630px;width:674px;height:207px"></div>
<div class="tg" style="left:1091px;top:3634px;width:35px;height:24px">▲</div>
<div class="h" style="left:1081px;top:3669px;width:674px"></div>
<div class="t" style="left:1109px;top:3670px;font-size:11px;color:#444">Label</div>
<div class="i" style="left:1106px;top:3693px;width:367px;height:109px;border-color:#ddd"></div>
<div class="c" style="left:1081px;top:3855px;width:674px;height:160px"></div>
<div class="tg" style="left:1091px;top:3860px;width:35px;height:24px">▲</div>
<div class="h" style="left:1081px;top:3895px;width:674px"></div>
<div class="t" style="left:1109px;top:3896px;font-size:11px;color:#444">Label</div>
<div class="i" style="left:1106px;top:3919px;width:367px;height:100px;border-color:#ddd"></div>

<!-- ============ LEFT BOTTOM PANEL ============ -->
<div class="a n" style="left:118px;top:2766px;width:800px;height:1228px;background:#edf0f4;box-shadow:0 2px 8px rgba(0,0,0,.12)"></div>
<div class="a" style="left:118px;top:2766px;width:800px;height:50px;background:#fff"></div>
<svg class="a" style="left:149px;top:2780px" width="32" height="22" viewBox="0 0 18 14"><rect x="1" y="2" width="16" height="9" rx="2" fill="#7cc4b4" stroke="#555" stroke-width=".8"/><rect x="3" y="3.5" width="4" height="3" fill="#fff"/><rect x="8" y="3.5" width="4" height="3" fill="#fff"/><circle cx="5" cy="12" r="1.6" fill="#444"/><circle cx="13" cy="12" r="1.6" fill="#444"/></svg>
<div class="t n" style="left:187px;top:2781px;font-size:20px;font-weight:bold;font-style:italic;color:#111">roadsurfer<span style="color:#6dbdad;font-weight:normal">rent</span></div>
<div class="t" style="left:385px;top:2779px;font-size:20px;color:#222">☰</div><div class="t n" style="left:418px;top:2782px;font-size:16px;color:#333">Menu</div>
<div class="t n" style="left:713px;top:2784px;font-size:14px;color:#333">garry_cartwright@auer.io</div>
<div class="t" style="left:877px;top:2787px;font-size:10px">▼</div>
<div class="a" style="left:419px;top:2836px;width:198px;height:38px;border-radius:19px;background:#d8e6e4"></div>
<div class="a n" style="left:419px;top:2836px;width:108px;height:38px;border-radius:19px;background:#fff;color:#5aab9c;font-size:16px;display:flex;align-items:center;justify-content:center">Pickup</div>
<div class="t n" style="left:548px;top:2847px;font-size:16px;color:#444">Return</div>
<div class="a" style="left:138px;top:2911px;width:758px;height:60px;border-radius:3px;background:#62a89e"></div>
<div class="a" style="left:138px;top:2911px;width:344px;height:60px;border-radius:3px 0 0 3px;background:#6dbdad"></div>
<div class="t n" style="left:162px;top:2931px;font-size:21px;font-weight:bold;color:#fff">Frankfurt Station</div>
<div class="t" style="left:335px;top:2934px;font-size:15px;color:#fff">▼</div>
<svg class="a" style="left:502px;top:2929px" width="24" height="26" viewBox="0 0 24 26"><circle cx="10" cy="10" r="8.5" fill="none" stroke="#fff" stroke-width="1.8"/><path d="M16 17l6 7" stroke="#fff" stroke-width="2"/></svg>
<div class="t n" style="left:549px;top:2931px;font-size:21px;color:#fff">Search...</div>
<div class="t n" style="left:140px;top:3004px;font-size:15px;font-weight:bold;color:#333">Show Status</div>
<div class="a n" style="left:243px;top:2995px;width:119px;height:35px;border:2px solid #5fd39a;border-radius:3px;background:#fff;color:#3ec58a;font-size:14px;display:flex;align-items:center;justify-content:center">Today (2)</div>
<div class="a n" style="left:378px;top:2995px;width:119px;height:35px;border:2px solid #f04848;border-radius:3px;background:#fff;color:#f04848;font-size:14px;display:flex;align-items:center;justify-content:center">Past (999)</div>
<div class="a n" style="left:513px;top:2995px;width:119px;height:35px;border:2px solid #999;border-radius:3px;background:#fff;color:#888;font-size:14px;display:flex;align-items:center;justify-content:center">Furture (6)</div>
<div class="a n" style="left:648px;top:2995px;width:119px;height:35px;border-radius:3px;background:#6dbdad;color:#fff;font-size:14px;display:flex;align-items:center;justify-content:center">All (1000)</div>
<div class="a" style="left:138px;top:3054px;width:758px;height:50px;border-radius:3px;background:#e8eaec"></div>
<div class="n" style="font-size:15px;font-weight:bold;color:#333">
<div class="t" style="left:202px;top:3069px">Datetime</div>
<div class="a" style="left:309px;top:3063px;line-height:16px;white-space:nowrap">Customer/Order ID<br>/ Booking type</div>
<div class="t" style="left:482px;top:3069px">Vehicle/SubGroup</div>
<div class="t" style="left:665px;top:3069px">Extra items</div></div>

<!-- rows -->
<div class="a" style="left:138px;top:3115px;width:758px;height:90px;background:#fff;border-left:3px solid #5ecb73;border-radius:3px"></div>
<div class="a" style="left:138px;top:3217px;width:758px;height:392px;background:#fff;border-radius:3px"></div>
<div class="a" style="left:138px;top:3217px;width:3px;height:81px;background:#5ecb73"></div>
<div class="h" style="left:141px;top:3298px;width:755px;background:#eef0f2"></div>
<div class="a" style="left:506px;top:3298px;width:1px;height:309px;background:#eef0f2"></div>
<div class="a" style="left:138px;top:3620px;width:758px;height:90px;background:#fff;border-left:3px solid #f04848;border-radius:3px"></div>
<div class="a" style="left:138px;top:3721px;width:758px;height:90px;background:#fff;border-left:3px solid #bbb;border-radius:3px"></div>
<div class="a" style="left:138px;top:3823px;width:758px;height:89px;background:#fff;border-left:3px solid #bbb;border-radius:3px"></div>
<div class="a" style="left:138px;top:3924px;width:758px;height:90px;background:#fff;border-left:3px solid #bbb;border-radius:3px"></div>

<!-- toggles -->
<div class="tg" style="left:149px;top:3147px;width:37px;height:26px;border-radius:13px">▼</div>
<div class="tg" style="left:149px;top:3243px;width:37px;height:26px;border-radius:13px">▲</div>
<div class="tg" style="left:148px;top:3646px;width:37px;height:26px;border-radius:13px">▼</div>
<div class="tg" style="left:148px;top:3745px;width:37px;height:26px;border-radius:13px">▼</div>
<div class="tg" style="left:149px;top:3845px;width:37px;height:26px;border-radius:13px">▼</div>
<div class="tg" style="left:149px;top:3944px;width:37px;height:26px;border-radius:13px">▼</div>
<div class="a" style="left:160px;top:3120px;width:15px;height:12px;border:1px solid #ddd;border-radius:3px"></div>
<div class="a" style="left:160px;top:3221px;width:15px;height:12px;border:1px solid #ddd;border-radius:3px"></div>
<div class="a" style="left:159px;top:3728px;width:15px;height:12px;border:1px solid #ddd;border-radius:3px"></div>

<div class="n B">
<div class="a" style="left:202px;top:3129px;line-height:16px">24 Nov 2020<br>11:00</div>
<div class="t" style="left:309px;top:3129px;font-weight:bold">Ray Samy Soliman</div><div class="t" style="left:309px;top:3150px">3637101253</div><div class="t" style="left:309px;top:3171px">Booking</div>
<div class="a" style="left:482px;top:3129px;line-height:16px;white-space:nowrap"><b>M-RS-5083</b><br>Surfer Suit<br>Mercedes Marco Polo</div>
<div class="t" style="left:665px;top:3129px">Küchenbox</div><div class="t lk" style="left:667px;top:3152px;font-size:12px">&gt;&gt; see all extra</div>

<div class="a" style="left:204px;top:3227px;line-height:16px">24 Nov 2020<br>12:00</div>
<div class="t" style="left:309px;top:3227px;font-weight:bold">Douglas Bryant</div><div class="t" style="left:309px;top:3247px">3637101253</div><div class="t" style="left:309px;top:3267px">Booking</div>
<div class="a" style="left:483px;top:3227px;line-height:16px;white-space:nowrap"><b>M-RS-5083</b><br>Surfer Suit<br>Mercedes Marco Polo</div>
<div class="t" style="left:667px;top:3227px">Küchenbox</div><div class="t lk" style="left:667px;top:3250px;font-size:12px">&gt;&gt; see all extra</div>

<div class="t" style="left:165px;top:3315px;font-weight:bold">Internal remark</div>
<div class="a" style="left:165px;top:3341px;width:330px;line-height:16px">It is a long established fact that a reader will be distracted by the readable content of a page when looking at its layout. The point of using Lorem Ipsum is that it has a more-or-less normal distribution of letters, as opposed to using 'Content here, content here', making it look like readable English</div>
<div class="t" style="left:165px;top:3487px;font-weight:bold">Remark for lease</div>
<div class="a" style="left:165px;top:3513px;width:330px;line-height:16px;color:#333">Contrary to popular belief, Lorem Ipsum is not simply random text. It has roots in a piece of classical Latin literature from 45 BC, making it over 2000 years old.</div>
<div class="t" style="left:536px;top:3315px;font-weight:bold">List of booked extra items/addons</div>
<div class="t" style="left:536px;top:3341px;color:#888">Qty &nbsp; &nbsp; Description</div>
<div class="t" style="left:539px;top:3375px;color:#222">2</div><div class="t" style="left:580px;top:3375px">Fahrradträger für 4 Räder</div>
<div class="t" style="left:539px;top:3400px;color:#222">1</div><div class="a" style="left:580px;top:3400px;line-height:16px;white-space:nowrap">2 weitere Campingstühle (zusätzlich zu<br>den beiden Stühlen in Camper!)</div>
<div class="t" style="left:539px;top:3445px;color:#222">1</div><div class="a" style="left:580px;top:3445px;line-height:16px;white-space:nowrap">1 weiterer Campingtisch (zusätzlich zu<br>dem Campingtisch im Camper!)</div>
<div class="t" style="left:539px;top:3489px;color:#222">1</div><div class="t" style="left:580px;top:3489px">Mobile Campingtoilette</div>
<div class="t" style="left:539px;top:3515px;color:#222">1</div><div class="t" style="left:580px;top:3515px">Servicepauschale DOG SUITE</div>
<div class="t" style="left:539px;top:3540px;color:#222">1</div><div class="t" style="left:580px;top:3540px">Küchenbox</div>

<div class="a" style="left:202px;top:3637px;line-height:16px">24 Nov 2020<br>13:00</div>
<div class="t" style="left:308px;top:3637px;font-weight:bold">Rhoda Flores</div><div class="t" style="left:308px;top:3657px">3637101253</div><div class="t" style="left:308px;top:3677px">Subscription</div>
<div class="a" style="left:484px;top:3637px;line-height:16px;white-space:nowrap"><b>M-RS-5083</b><br>Surfer Suit<br>Mercedes Marco Polo</div>
<div class="t" style="left:663px;top:3637px">Küchenbox</div>

<div class="a" style="left:202px;top:3738px;line-height:16px">24 Nov 2020<br>14:00</div>
<div class="t" style="left:309px;top:3738px;font-weight:bold">Landon Castillo</div><div class="t" style="left:309px;top:3758px">3637101253</div><div class="t" style="left:309px;top:3777px">Single Sale</div>
<div class="a" style="left:484px;top:3738px;line-height:16px;white-space:nowrap"><b>M-RS-5083</b><br>Surfer Suit<br>Mercedes Marco Polo</div>
<div class="t" style="left:663px;top:3738px">Küchenbox</div><div class="t lk" style="left:663px;top:3762px;font-size:12px">&gt;&gt; see all extra</div>

<div class="a" style="left:202px;top:3840px;line-height:16px">24 Nov 2020<br>15:00</div>
<div class="t" style="left:310px;top:3840px;font-weight:bold">Timothy Rice</div><div class="t" style="left:310px;top:3858px">3637101253</div><div class="t" style="left:310px;top:3877px">Merchandise</div>
<div class="a" style="left:483px;top:3840px;line-height:16px;white-space:nowrap"><b>M-RS-5083</b><br>Surfer Suit<br>Mercedes Marco Polo</div>
<div class="t" style="left:663px;top:3840px">Küchenbox</div>

<div class="a" style="left:202px;top:3941px;line-height:16px">24 Nov 2020<br>16:00</div>
<div class="t" style="left:310px;top:3941px;font-weight:bold">Timothy Rice</div><div class="t" style="left:310px;top:3959px">3637101253</div><div class="t" style="left:310px;top:3978px">Lost/Destroyed Items</div>
<div class="a" style="left:483px;top:3941px;line-height:16px;white-space:nowrap"><b>M-RS-5083</b><br>Surfer Suit<br>Mercedes Marco Polo</div>
<div class="t" style="left:663px;top:3941px">Küchenbox</div><div class="t lk" style="left:663px;top:3964px;font-size:12px">&gt;&gt; see all extra</div>
</div>

<div class="hv n" style="top:3142px">Handover</div>
<div class="hv n" style="top:3236px">Handover</div>
<div class="hv n" style="top:3648px">Handover</div>
<div class="hv n" style="top:3744px">Handover</div>
<div class="hv n" style="top:3847px">Handover</div>
<div class="hv n" style="top:3947px">Handover</div>

</body></html>
